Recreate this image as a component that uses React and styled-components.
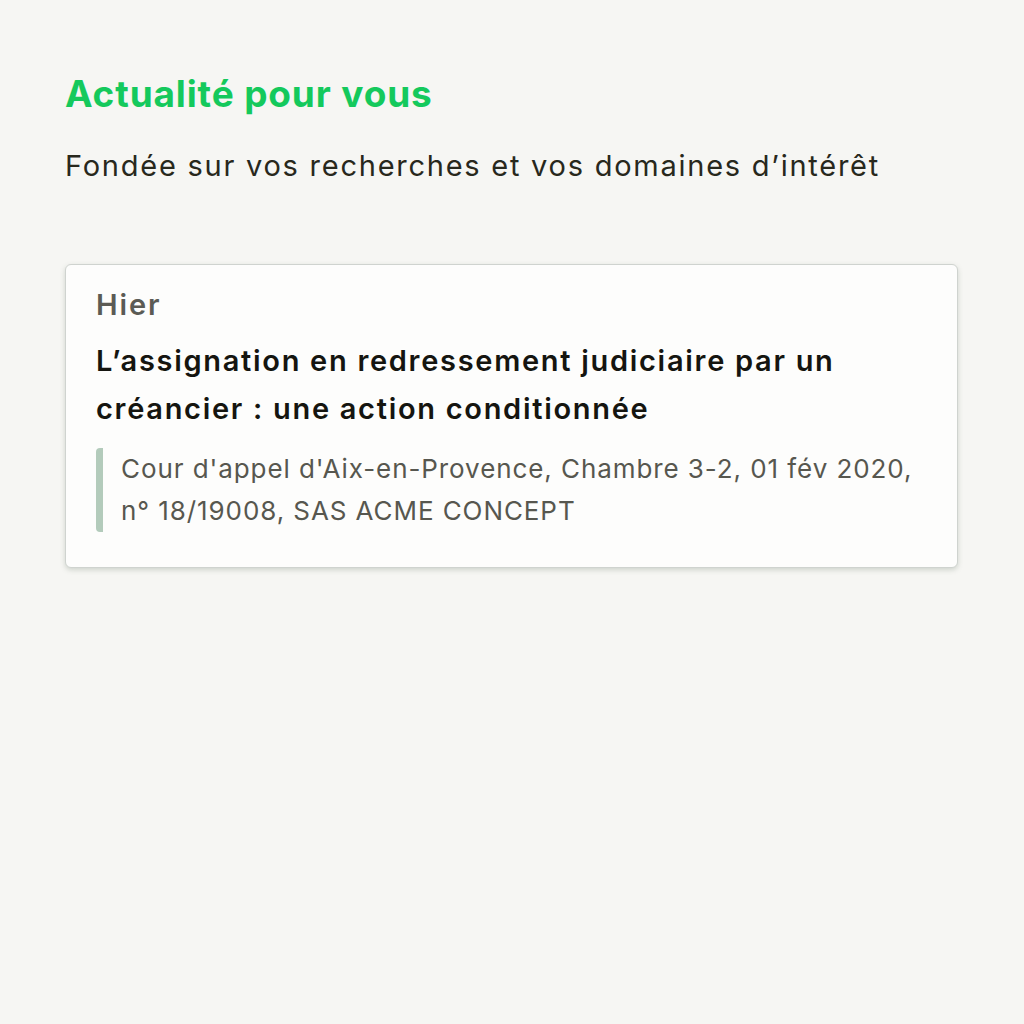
import React from 'react';
import styled, { createGlobalStyle } from 'styled-components';

const GlobalStyle = createGlobalStyle`
  html, body {
    margin: 0;
    padding: 0;
    background: #f6f6f3;
  }
  body {
    font-family: Inter, "Noto Sans", sans-serif;
    -webkit-font-smoothing: antialiased;
  }
`;

const Page = styled.main`
  min-height: 1024px;
  box-sizing: border-box;
  padding: 72px 66px 0 65px;
`;

const Heading = styled.h1`
  margin: 0;
  font-size: 37px;
  line-height: 44px;
  font-weight: 700;
  letter-spacing: 0.85px;
  color: #14c95c;
`;

const Subtitle = styled.p`
  margin: 30px 0 0 0;
  font-size: 29px;
  line-height: 40px;
  font-weight: 400;
  letter-spacing: 1.75px;
  color: #28281c;
`;

const Card = styled.article`
  margin-top: 78px;
  background: #fdfdfc;
  border: 1px solid #cfd3cf;
  border-radius: 6px;
  box-shadow: 0 2px 5px rgba(90, 110, 90, 0.25);
  padding: 20px 30px 35px 30px;
`;

const DateLabel = styled.div`
  font-size: 29px;
  line-height: 40px;
  font-weight: 600;
  letter-spacing: 1.9px;
  color: #5b5b55;
`;

const Title = styled.h2`
  margin: 12px 0 0 0;
  font-size: 29px;
  line-height: 48px;
  font-weight: 600;
  letter-spacing: 1.7px;
  color: #151510;
`;

const Source = styled.blockquote`
  margin: 15px 0 0 0;
  padding: 0 0 0 18px;
  border-left: 7px solid #b3cbbb;
  border-radius: 4px;
  font-size: 26px;
  line-height: 42px;
  letter-spacing: 0.92px;
  color: #57574f;
`;

export default function App() {
  return (
    <>
      <GlobalStyle />
      <Page>
        <Heading>Actualité pour vous</Heading>
        <Subtitle>Fondée sur vos recherches et vos domaines d’intérêt</Subtitle>
        <Card>
          <DateLabel>Hier</DateLabel>
          <Title>
            L’assignation en redressement judiciaire par un créancier : une action conditionnée
          </Title>
          <Source>
            Cour d'appel d'Aix-en-Provence, Chambre 3-2, 01 fév 2020, n° 18/19008, SAS ACME CONCEPT
          </Source>
        </Card>
      </Page>
    </>
  );
}
